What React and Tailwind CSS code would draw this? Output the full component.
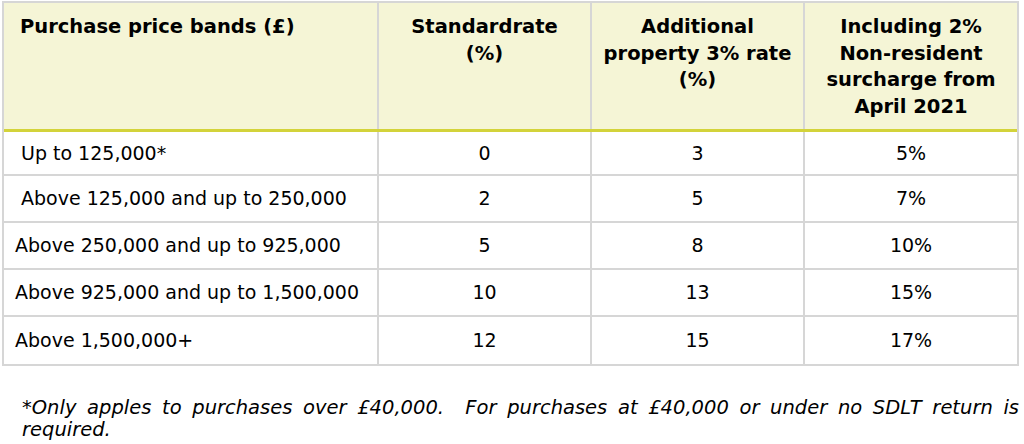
import React from "react";

const rows = [
  { band: "Up to 125,000*", indent: true, std: "0", add: "3", nr: "5%" },
  { band: "Above 125,000 and up to 250,000", indent: true, std: "2", add: "5", nr: "7%" },
  { band: "Above 250,000 and up to 925,000", std: "5", add: "8", nr: "10%" },
  { band: "Above 925,000 and up to 1,500,000", std: "10", add: "13", nr: "15%" },
  { band: "Above 1,500,000+", std: "12", add: "15", nr: "17%" },
];

const App = () => {
  return (
    <div
      className="w-[1024px] h-[444px] bg-white text-black pt-[1px] pl-[2px] overflow-hidden"
      style={{ fontFamily: '"DejaVu Sans", "Liberation Sans", sans-serif' }}
    >
      <div className="w-[1017px] border-2 border-[#d6d6d6]">
        <div className="grid grid-cols-[375px_213px_213px_212px] bg-[#f5f5d6] border-b-[3px] border-[#d3d33a] font-bold text-[19.5px] leading-[26.5px] h-[129px]">
          <div className="pl-[16px] pt-[11px] border-r-2 border-[#d6d6d6]">Purchase price bands (£)</div>
          <div className="pt-[11px] text-center border-r-2 border-[#d6d6d6]">
            Standardrate
            <br />
            (%)
          </div>
          <div className="pt-[11px] text-center border-r-2 border-[#d6d6d6]">
            Additional
            <br />
            property 3% rate
            <br />
            (%)
          </div>
          <div className="pt-[11px] text-center">
            Including 2%
            <br />
            Non-resident
            <br />
            surcharge from
            <br />
            April 2021
          </div>
        </div>
        {rows.map((r, i) => (
          <div
            key={i}
            className={
              "grid grid-cols-[375px_213px_213px_212px] text-[19px] " +
              (i === 0 ? "h-[44px] " : "h-[47px] ") +
              (i < rows.length - 1 ? "border-b-2 border-[#d6d6d6]" : "")
            }
          >
            <div className={"flex items-center border-r-2 border-[#d6d6d6] " + (r.indent ? "pl-[17px]" : "pl-[11px]")}>
              {r.band}
            </div>
            <div className="flex items-center justify-center border-r-2 border-[#d6d6d6]">{r.std}</div>
            <div className="flex items-center justify-center border-r-2 border-[#d6d6d6]">{r.add}</div>
            <div className="flex items-center justify-center">{r.nr}</div>
          </div>
        ))}
      </div>
      <p className="mt-[31px] ml-[20px] w-[997px] italic text-[19.5px] leading-[22px] text-justify">
        *Only apples to purchases over £40,000.&nbsp; For purchases at £40,000 or under no SDLT return is required.
      </p>
    </div>
  );
};

export default App;
